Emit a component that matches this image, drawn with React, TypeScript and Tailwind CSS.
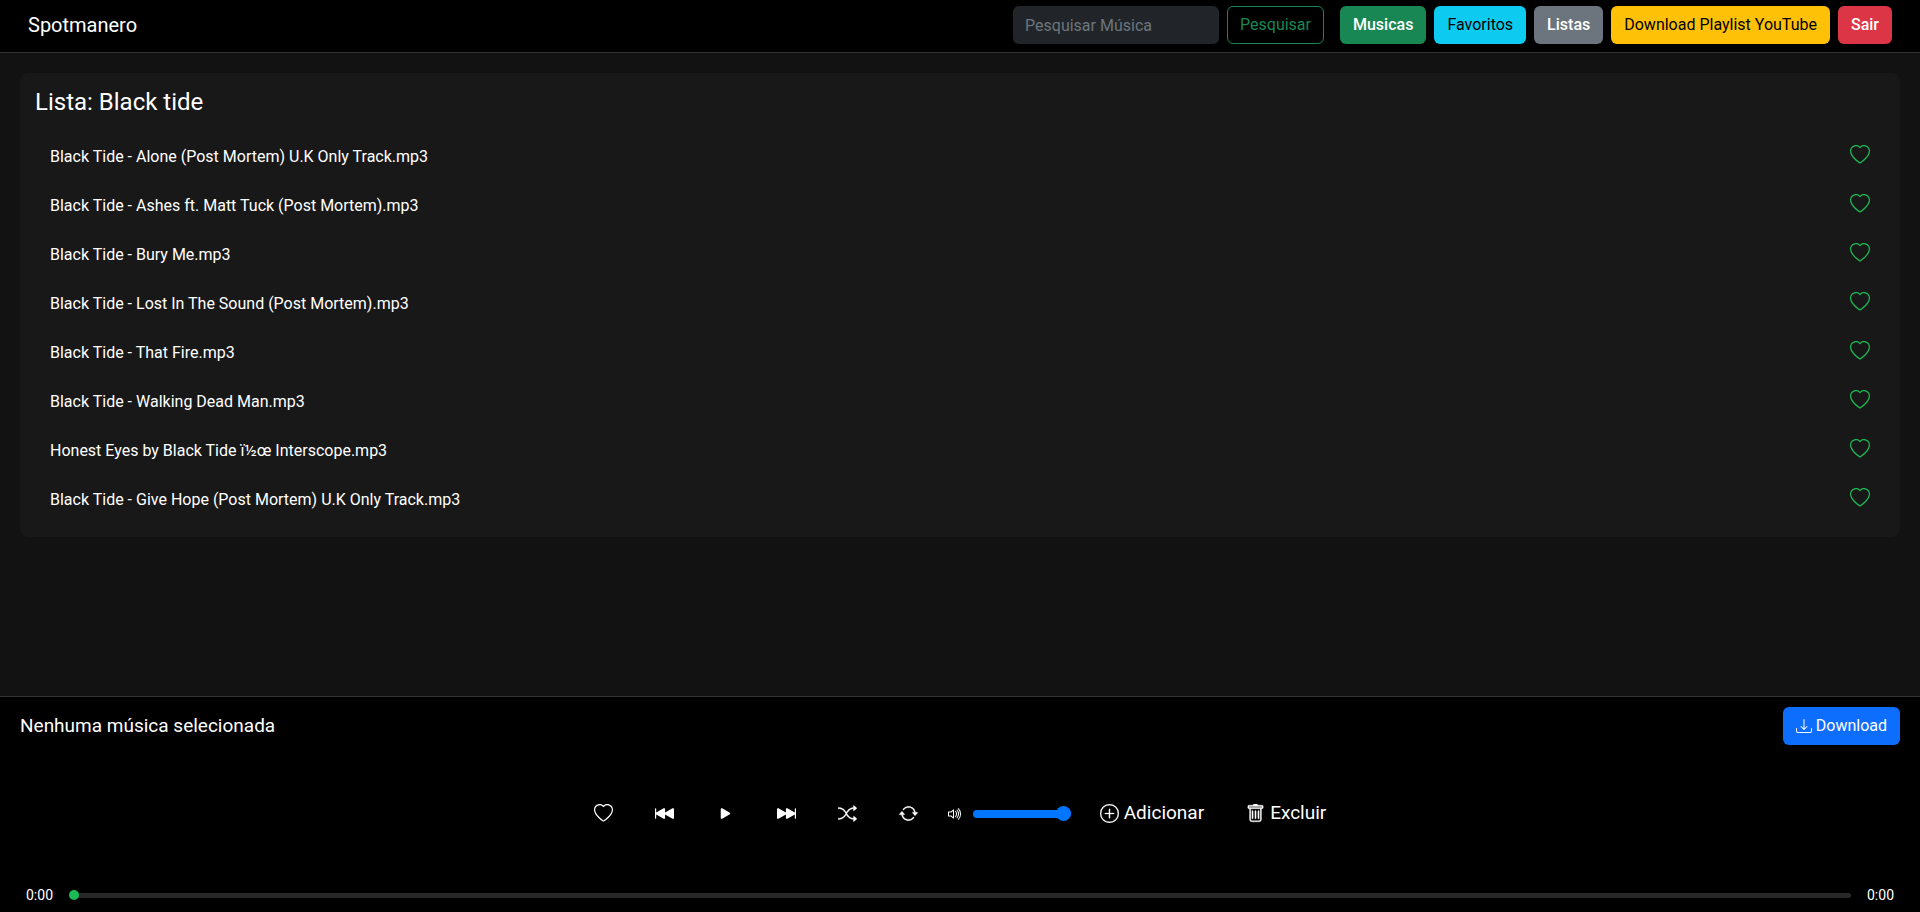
import type { ReactNode } from "react";
import {
  BsArrowRepeat,
  BsDownload,
  BsHeart,
  BsPlayFill,
  BsPlusCircle,
  BsShuffle,
  BsSkipBackwardFill,
  BsSkipForwardFill,
  BsTrash,
  BsVolumeUp,
} from "react-icons/bs";

const songs = [
  "Black Tide - Alone (Post Mortem) U.K Only Track.mp3",
  "Black Tide - Ashes ft. Matt Tuck (Post Mortem).mp3",
  "Black Tide - Bury Me.mp3",
  "Black Tide - Lost In The Sound (Post Mortem).mp3",
  "Black Tide - That Fire.mp3",
  "Black Tide - Walking Dead Man.mp3",
  "Honest Eyes by Black Tide ï½œ Interscope.mp3",
  "Black Tide - Give Hope (Post Mortem) U.K Only Track.mp3",
];

const links = [
  { label: "Musicas", style: "bg-[#198754] font-medium text-white" },
  { label: "Favoritos", style: "bg-[#0dcaf0] text-black" },
  { label: "Listas", style: "bg-[#6c757d] font-medium text-white" },
  { label: "Download Playlist YouTube", style: "bg-[#ffc107] text-black" },
  { label: "Sair", style: "bg-[#dc3545] font-medium text-white" },
];

function Control({ label, children }: { label: string; children: ReactNode }) {
  return (
    <button type="button" aria-label={label} className="flex px-[21px]">
      {children}
    </button>
  );
}

export default function App() {
  return (
    <div className="flex min-h-screen flex-col bg-[#121212] font-['Roboto',sans-serif] text-base text-white">
      <header className="flex items-center justify-between border-b border-[#333] bg-black px-7 pt-1.5 pb-2">
        <a href="#" className="text-xl">
          Spotmanero
        </a>
        <div className="flex gap-4">
          <form className="flex gap-2">
            <input
              type="search"
              aria-label="Pesquisar Música"
              placeholder="Pesquisar Música"
              className="h-[38px] w-[206px] rounded-md bg-[#212529] px-3 placeholder:text-[#6c757d]"
            />
            <button
              type="button"
              className="h-[38px] rounded-md border border-[#198754] px-3 text-[#198754]"
            >
              Pesquisar
            </button>
          </form>
          <nav className="flex gap-2">
            {links.map((link) => (
              <a
                key={link.label}
                href="#"
                className={`flex h-[38px] items-center rounded-md px-[13px] ${link.style}`}
              >
                {link.label}
              </a>
            ))}
          </nav>
        </div>
      </header>

      <main className="flex-1 p-5">
        <section className="rounded-lg bg-[#181818] px-[15px] pt-[15px] pb-[13px]">
          <h1 className="mb-[15px] text-2xl leading-[29px]">Lista: Black tide</h1>
          <ul>
            {songs.map((song) => (
              <li key={song} className="flex h-[49px] items-center justify-between px-[15px]">
                <span>{song}</span>
                <button type="button" aria-label="Favoritar" className="pb-1 text-xl text-[#1db954]">
                  <BsHeart />
                </button>
              </li>
            ))}
          </ul>
        </section>
      </main>

      <footer className="border-t border-[#333] bg-black px-5 pt-2.5 pb-0.5">
        <div className="flex items-center justify-between">
          <p className="text-[19px]">Nenhuma música selecionada</p>
          <button
            type="button"
            className="flex h-[38px] items-center gap-1 rounded-md bg-[#0d6efd] px-[13px]"
          >
            <BsDownload />
            Download
          </button>
        </div>

        <div className="flex h-[135px] items-center justify-center pt-0.5 text-[19px]">
          <Control label="Curtir">
            <BsHeart />
          </Control>
          <Control label="Anterior">
            <BsSkipBackwardFill />
          </Control>
          <Control label="Tocar">
            <BsPlayFill />
          </Control>
          <Control label="Próxima">
            <BsSkipForwardFill />
          </Control>
          <Control label="Aleatório">
            <BsShuffle strokeWidth={0.3} />
          </Control>
          <Control label="Repetir">
            <BsArrowRepeat strokeWidth={0.3} />
          </Control>
          <label className="flex items-center gap-2.5 px-2">
            <BsVolumeUp className="size-4" />
            <input
              type="range"
              aria-label="Volume"
              defaultValue={100}
              className="h-2 w-[98px] appearance-none rounded-full bg-[#0075ff] [&::-webkit-slider-thumb]:size-[15px] [&::-webkit-slider-thumb]:appearance-none [&::-webkit-slider-thumb]:rounded-full [&::-webkit-slider-thumb]:bg-[#0075ff]"
            />
          </label>
          <button type="button" className="flex items-center gap-[5px] px-[21px]">
            <BsPlusCircle strokeWidth={0.2} />
            Adicionar
          </button>
          <button type="button" className="flex items-center gap-[5px] px-[21px]">
            <BsTrash strokeWidth={0.3} />
            Excluir
          </button>
        </div>

        <div className="flex h-[30px] items-center gap-4 px-1.5 text-sm">
          <span>0:00</span>
          <input
            type="range"
            aria-label="Progresso"
            defaultValue={0}
            className="h-[5px] flex-1 appearance-none rounded-full bg-[#282828] [&::-webkit-slider-thumb]:size-2.5 [&::-webkit-slider-thumb]:appearance-none [&::-webkit-slider-thumb]:rounded-full [&::-webkit-slider-thumb]:bg-[#1db954]"
          />
          <span>0:00</span>
        </div>
      </footer>
    </div>
  );
}
